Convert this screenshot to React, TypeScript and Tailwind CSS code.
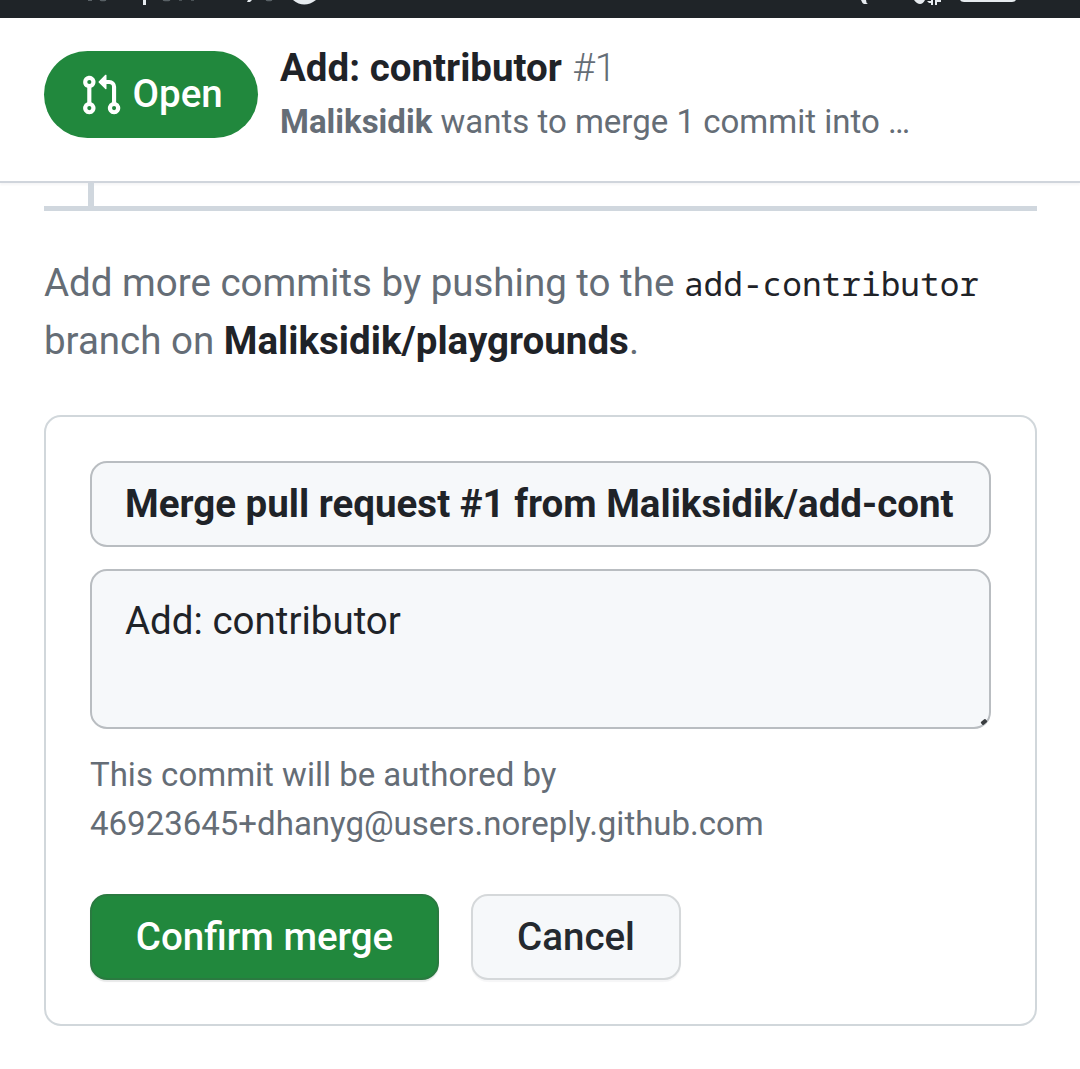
function StatusBar() {
  return (
    <div className="h-[18px] bg-[#1f2428]">
      <svg width="1080" height="18" viewBox="0 0 1080 18" fill="#e6ebef">
        <g fill="none" stroke="#596166" strokeWidth="1.4">
          <path d="M88 0.3h4M100 0q3 1 6 0M163 0q4 1.3 7 0M179 0h3M191 0h3M266 0q3 1 6 0" />
        </g>
        <path d="M143 0h3v5h-3zM248 0h4l-2 2h-3z" />
        <path d="M293 0Q304 9 316 0Z" />
        <path d="M861 0h5q0 3 2 4h-4q-2-1-3-4z" />
        <path d="M914 0h11q-2 4-5 4t-6-4z" />
        <path d="M927 1h4V0h2v5h-2V3h-2zM935 0h2v5h-2zM937 0h4v2h-4z" />
        <path d="M960 0h56q-1 2-4 2h-48q-3 0-4-2z" />
      </svg>
    </div>
  );
}

function PullRequestIcon() {
  return (
    <svg width="44" height="44" viewBox="0 0 16 16" fill="currentColor" className="shrink-0">
      <path d="M1.5 3.25a2.25 2.25 0 1 1 3 2.122v5.256a2.251 2.251 0 1 1-1.5 0V5.372A2.25 2.25 0 0 1 1.5 3.25Zm5.677-.177L9.573.677A.25.25 0 0 1 10 .854V2.5h1A2.5 2.5 0 0 1 13.5 5v5.628a2.251 2.251 0 1 1-1.5 0V5a1 1 0 0 0-1-1h-1v1.646a.25.25 0 0 1-.427.177L7.177 3.427a.25.25 0 0 1 0-.354ZM3.75 2.5a.75.75 0 1 0 0 1.5.75.75 0 0 0 0-1.5Zm0 9.5a.75.75 0 1 0 0 1.5.75.75 0 0 0 0-1.5Zm8.25.75a.75.75 0 1 0 1.5 0 .75.75 0 0 0-1.5 0Z" />
    </svg>
  );
}

export default function App() {
  return (
    <div className="h-[1069px] w-[1080px] overflow-hidden bg-white font-['Roboto',sans-serif] text-[38.5px] text-[#656d76]">
      <StatusBar />
      <header className="flex h-[165px] border-b-2 border-[#d0d5dc] pt-[33px] pl-[44px] shadow-[0_2px_2px_rgba(31,35,40,0.04)]">
        <div className="flex h-[87px] w-[214px] items-center rounded-full bg-[#21883d] pl-[35px] font-medium text-white">
          <PullRequestIcon />
          <span className="pb-[2px] pl-[9.5px]">Open</span>
        </div>
        <div className="pl-[22px] whitespace-nowrap">
          <h1 className="h-[50px] leading-[34px] font-bold text-[#1f2328]">
            Add: contributor <span className="ml-px font-light text-[#656d76]">#1</span>
          </h1>
          <p className="text-[33px] leading-[41px]">
            <b>Maliksidik</b> wants to merge 1 commit into …
          </p>
        </div>
      </header>
      <div className="ml-[88px] h-[23px] w-[6px] bg-[#d0d7de]" />
      <div className="ml-[44px] h-[5px] w-[993px] bg-[#d0d7de]" />
      <p className="mx-[44px] mt-[42.5px] h-[114px] leading-[57px] whitespace-nowrap">
        Add more commits by pushing to the{" "}
        <code className="font-['Noto_Sans_Mono','DejaVu_Sans_Mono',monospace] text-[32.8px] text-[#1f2328]">add-contributor</code>
        <br />
        branch on <b className="text-[#1f2328]">Maliksidik/playgrounds</b>.
      </p>
      <section className="mt-[47.5px] ml-[44px] h-[611px] w-[993px] rounded-[17px] border-2 border-[#d1d7db] px-[44px] pt-[44px]">
        <input
          readOnly
          value="Merge pull request #1 from Maliksidik/add-cont"
          className="block h-[86px] w-[901px] rounded-[17px] border-2 border-[#b9bdc1] bg-[#f6f8fa] px-[33px] pb-[2px] font-bold text-[#1f2328] outline-none"
        />
        <div className="relative mt-[22px] h-[160px] w-[901px] rounded-[17px] border-2 border-[#b9bdc1] bg-[#f6f8fa] px-[33px] pt-[21px] leading-[58px] text-[#1f2328]">
          Add: contributor
          <span className="absolute right-[2px] bottom-[3px] h-[4px] w-[6px] -rotate-40 rounded-[1px] bg-[#3a3d40]" />
        </div>
        <p className="mt-[21px] text-[33px] leading-[49px]">
          This commit will be authored by
          <br />
          46923645+dhanyg@users.noreply.github.com
        </p>
        <div className="mt-[46px] flex gap-[32px] font-medium">
          <button className="h-[86px] w-[349px] rounded-[17px] border-2 border-[#2a7a40] bg-[#21883d] text-white shadow-[0_2px_1px_rgba(31,35,40,0.1)]">
            Confirm merge
          </button>
          <button className="h-[86px] w-[210px] rounded-[17px] border-2 border-[#d5d8da] bg-[#f6f8fa] text-[#24292f] shadow-[0_2px_1px_rgba(31,35,40,0.04)]">
            Cancel
          </button>
        </div>
      </section>
    </div>
  );
}
